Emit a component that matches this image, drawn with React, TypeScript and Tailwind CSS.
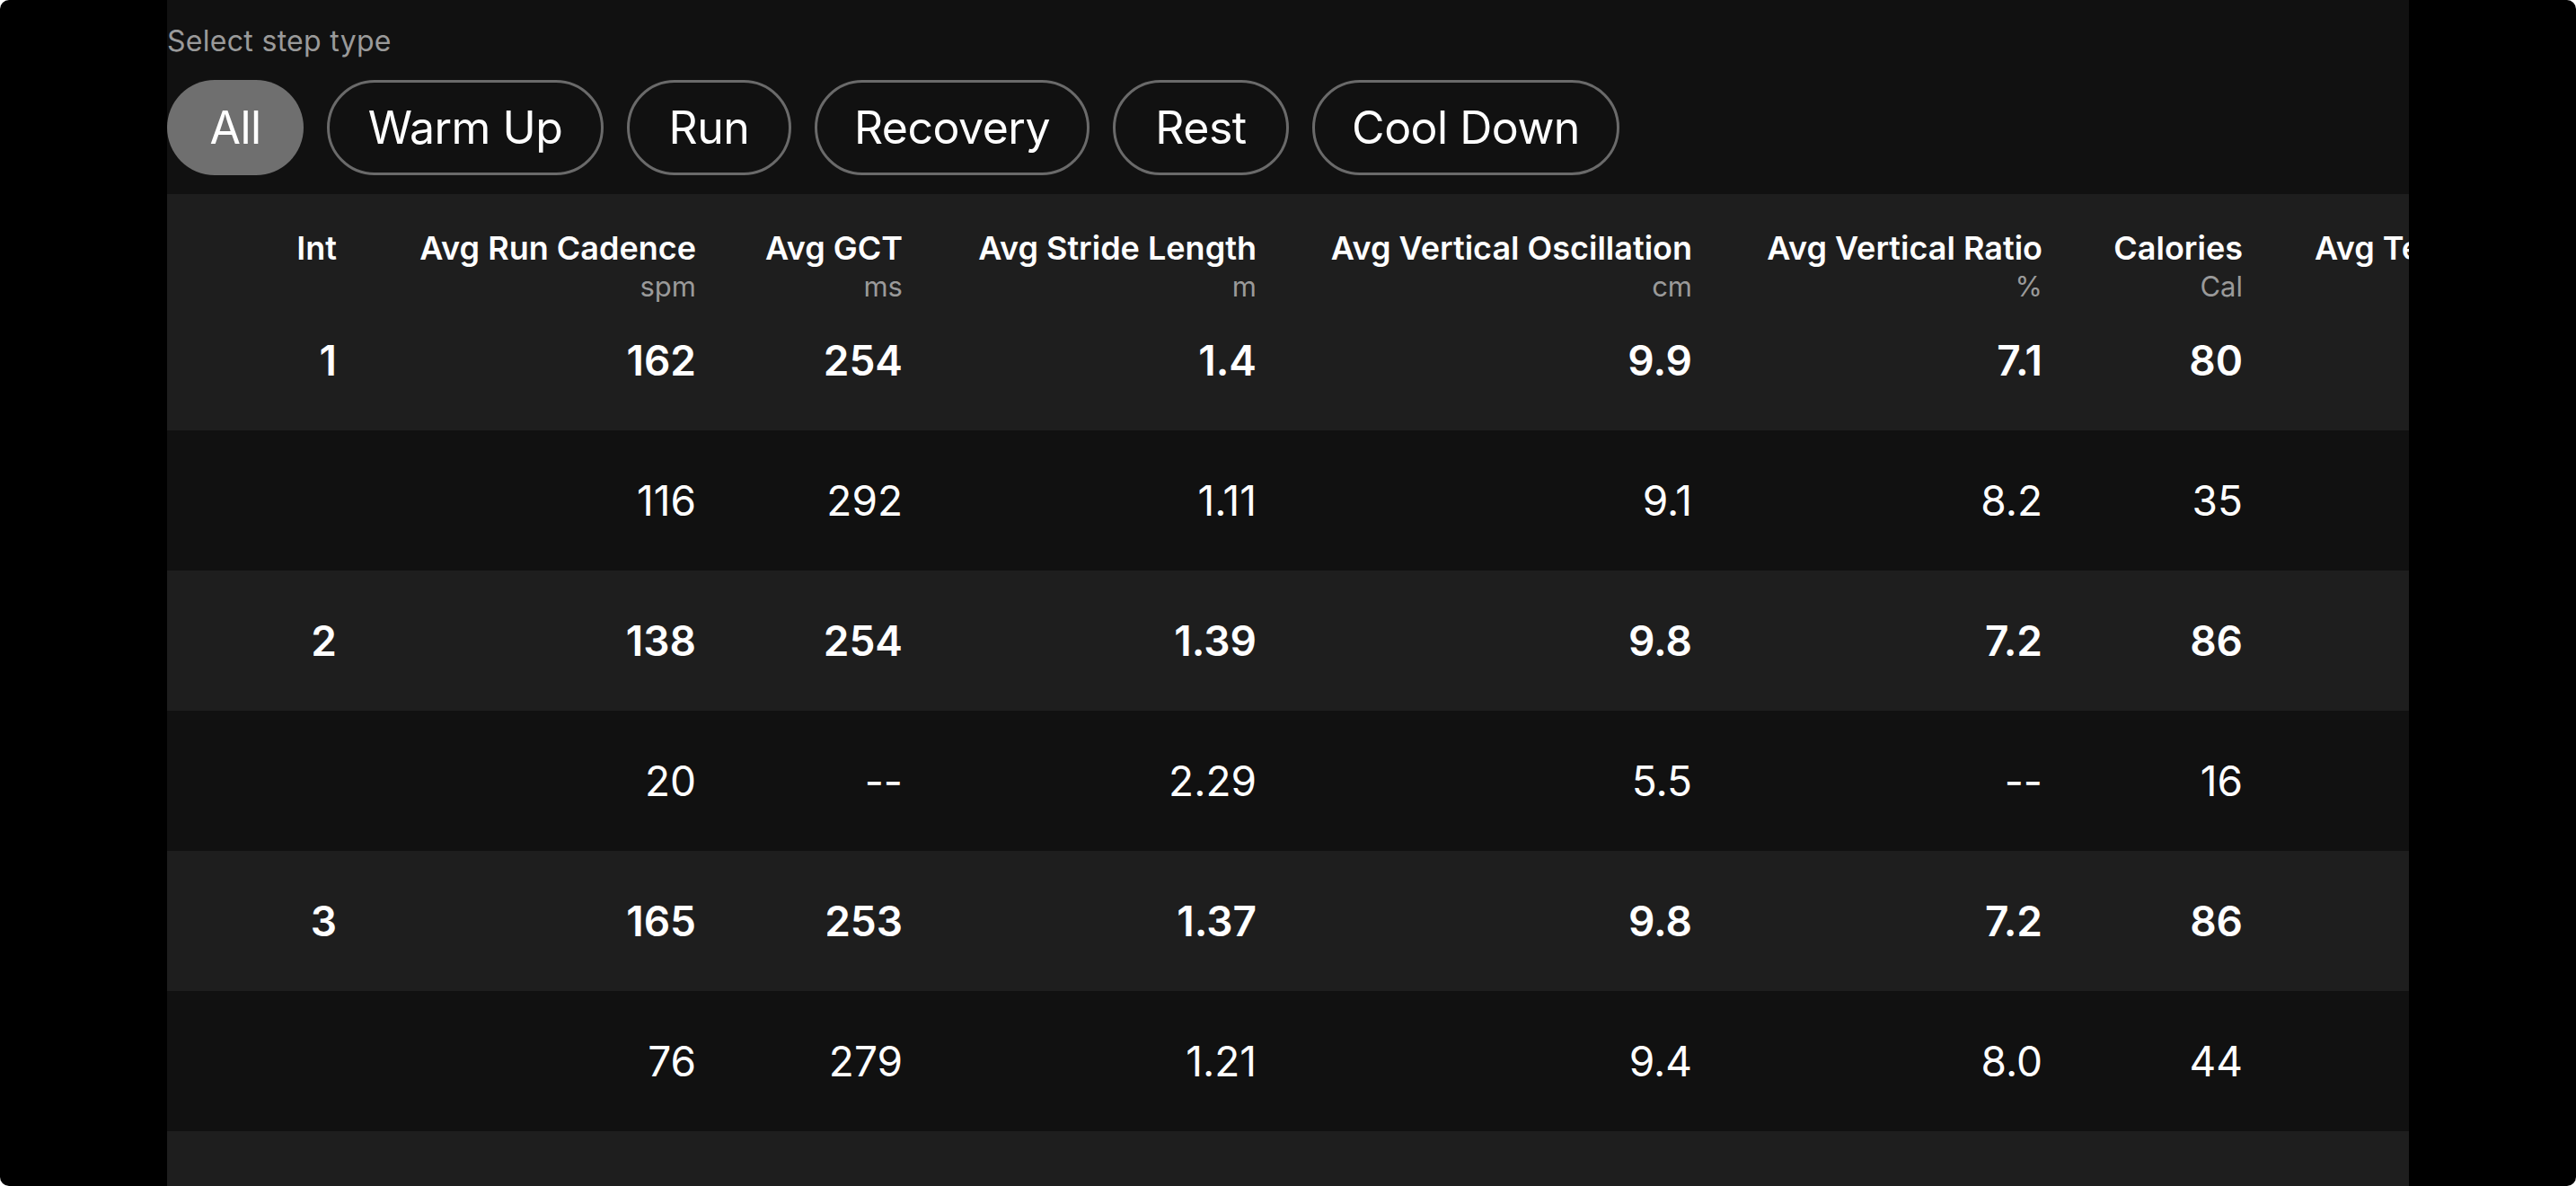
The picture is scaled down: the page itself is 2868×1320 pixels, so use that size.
import React from "react";

interface Column {
  title: string;
  unit: string;
  width: string;
}

interface Row {
  main: boolean;
  values: string[];
}

const stepTypes = ["All", "Warm Up", "Run", "Recovery", "Rest", "Cool Down"];

// pill widths taken from the design
const pillWidths: Record<string, string> = {
  All: "w-[152px]",
  "Warm Up": "w-[308px]",
  Run: "w-[183px]",
  Recovery: "w-[306px]",
  Rest: "w-[196px]",
  "Cool Down": "w-[342px]",
};

const columns: Column[] = [
  { title: "Int", unit: "", width: "w-[189px]" },
  { title: "Avg Run Cadence", unit: "spm", width: "w-[400px]" },
  { title: "Avg GCT", unit: "ms", width: "w-[230px]" },
  { title: "Avg Stride Length", unit: "m", width: "w-[394px]" },
  { title: "Avg Vertical Oscillation", unit: "cm", width: "w-[485px]" },
  { title: "Avg Vertical Ratio", unit: "%", width: "w-[390px]" },
  { title: "Calories", unit: "Cal", width: "w-[223px]" },
];

const rows: Row[] = [
  { main: true, values: ["1", "162", "254", "1.4", "9.9", "7.1", "80"] },
  { main: false, values: ["", "116", "292", "1.11", "9.1", "8.2", "35"] },
  { main: true, values: ["2", "138", "254", "1.39", "9.8", "7.2", "86"] },
  { main: false, values: ["", "20", "--", "2.29", "5.5", "--", "16"] },
  { main: true, values: ["3", "165", "253", "1.37", "9.8", "7.2", "86"] },
  { main: false, values: ["", "76", "279", "1.21", "9.4", "8.0", "44"] },
  { main: true, values: ["4", "147", "254", "1.38", "9.7", "7.1", "84"] },
];

function StepTypeFilter() {
  const selected = "All";
  return (
    <div className="flex flex-col pt-[28px] pb-[21px] bg-[#111111]">
      <span className="text-[32px] leading-[36px] tracking-[0.3px] text-[#9a9a9a]">Select step type</span>
      <div className="flex items-center gap-[26px] mt-[25px]">
        {stepTypes.map((type) => (
          <button
            key={type}
            className={
              type === selected
                ? `${pillWidths[type]} h-[106px] rounded-full bg-[#6f6f6f] text-[50px] tracking-[-0.5px] text-white flex items-center justify-center`
                : `${pillWidths[type]} h-[106px] rounded-full border-[3px] border-[#6a6a6a] text-[50px] tracking-[-0.5px] text-white flex items-center justify-center`
            }
          >
            {type}
          </button>
        ))}
      </div>
    </div>
  );
}

function IntervalTable() {
  return (
    <div className="flex flex-col">
      {/* units hang a little below the header band, keep them on top */}
      <div className="relative z-10 flex h-[107px] pt-[36px] bg-[#1e1e1e]">
        {columns.map((col) => (
          <div key={col.title} className={`${col.width} shrink-0 flex flex-col items-end`}>
            <span className="text-[36px] leading-[48px] font-semibold text-white whitespace-nowrap">{col.title}</span>
            <span className="text-[31px] leading-[38px] text-[#9a9a9a]">{col.unit}</span>
          </div>
        ))}
        <div className="shrink-0 pl-[80px]">
          <span className="text-[36px] leading-[48px] font-semibold text-white whitespace-nowrap">Avg Temperature</span>
        </div>
      </div>
      {rows.map((row, idx) => (
        <div
          key={idx}
          className={row.main ? "flex h-[156px] items-center bg-[#1e1e1e]" : "flex h-[156px] items-center bg-[#111111]"}
        >
          {row.values.map((v, i) => (
            <div
              key={i}
              className={
                row.main
                  ? `${columns[i].width} shrink-0 text-right text-[46px] font-semibold text-white`
                  : `${columns[i].width} shrink-0 text-right text-[46px] text-white`
              }
            >
              {v}
            </div>
          ))}
        </div>
      ))}
    </div>
  );
}

export default function App() {
  return (
    <div
      className="w-[2868px] h-[1320px] bg-black rounded-[10px] overflow-hidden flex"
      style={{ fontFamily: "Inter, 'Noto Sans', sans-serif" }}
    >
      <div className="ml-[186px] w-[2496px] h-full bg-[#111111] overflow-hidden flex flex-col">
        <StepTypeFilter />
        <IntervalTable />
      </div>
    </div>
  );
}
